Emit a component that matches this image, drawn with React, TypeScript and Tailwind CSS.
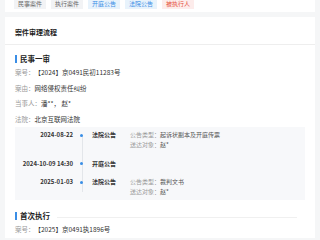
import React from "react";

const tags = [
  { label: "民事案件", cls: "bg-[#f2f3f5] text-[#666]" },
  { label: "执行案件", cls: "bg-[#f2f3f5] text-[#666]" },
  { label: "开庭公告", cls: "bg-[#e8f3fc] text-[#3a8ee6]" },
  { label: "法院公告", cls: "bg-[#e8f3fc] text-[#3a8ee6]" },
  { label: "被执行人", cls: "bg-[#fdeceb] text-[#e5533c]" },
];

const events = [
  {
    date: "2024-08-22",
    title: "法院公告",
    lines: [
      ["公告类型：", "起诉状副本及开庭传票"],
      ["送达对象：", "赵*"],
    ],
  },
  { date: "2024-10-09 14:30", title: "开庭公告", lines: [] },
  {
    date: "2025-01-03",
    title: "法院公告",
    lines: [
      ["公告类型：", "裁判文书"],
      ["送达对象：", "赵*"],
    ],
  },
];

function Field({ label, value }: { label: string; value: string }) {
  return (
    <div className="flex h-[15.5px] items-center text-[6.5px]">
      <span className="text-[#999]">{label}</span>
      <span className="text-[#333]">{value}</span>
    </div>
  );
}

function SectionTitle({ title, line }: { title: string; line?: boolean }) {
  return (
    <div className="flex items-center gap-[3px] text-[7.5px] font-bold text-[#222]">
      <span className="h-[8px] w-[2px] bg-[#3a8ee6]" />
      {title}
      {line && <span className="ml-[4px] mr-[8px] mt-[4px] h-px flex-1 bg-[#f0f0f0]" />}
    </div>
  );
}

export default function App() {
  return (
    <div
      className="h-[240px] w-[320px] overflow-hidden bg-[#f5f6f7]"
      style={{ fontFamily: '"Noto Sans CJK SC", "Noto Sans", sans-serif' }}
    >
      {/* tags */}
      <div className="mx-[5px] flex h-[12px] items-end gap-[5px] bg-white px-[9px] pb-[3px]">
        {tags.map((t) => (
          <span
            key={t.label}
            className={`flex h-[11px] items-center px-[4px] text-[6px] leading-none ${t.cls}`}
          >
            {t.label}
          </span>
        ))}
      </div>

      {/* process card */}
      <div className="mx-[5px] mt-[5px] bg-white">
        <div className="flex h-[28px] items-end border-b border-[#eeeeee] px-[10px] pb-[7px] text-[7px] font-bold text-[#222]">
          案件审理流程
        </div>

        <div className="px-[10px] pt-[8px]">
          <SectionTitle title="民事一审" />
          <div className="mt-[1px]">
            <Field label="案号：" value="【2024】京0491民初11283号" />
            <Field label="案由：" value="网络侵权责任纠纷" />
            <Field label="当事人：" value="潘**， 赵*" />
            <Field label="法院：" value="北京互联网法院" />
          </div>

          <div className="relative flex flex-col gap-[8.5px] bg-[#f7f8fa] pb-[3px] pt-[3px]">
            <div className="absolute bottom-[8px] left-[67px] top-[8px] w-px bg-[#e3e6ea]" />
            {events.map((e, i) => (
              <div key={i} className="flex text-[6px]">
                <div className="w-[58px] text-right font-bold leading-[10px] text-[#333]">
                  {e.date}
                </div>
                <div className="relative w-[19px]">
                  <span className="absolute left-[7px] top-[3.5px] h-[3px] w-[3px] rounded-full bg-[#3a8ee6]" />
                </div>
                <div className="w-[38px] font-bold leading-[10px] text-[#333]">
                  {e.title}
                </div>
                <div className="leading-[10px]">
                  {e.lines.map(([l, v]) => (
                    <div key={l}>
                      <span className="text-[#999]">{l}</span>
                      <span className="text-[#555]">{v}</span>
                    </div>
                  ))}
                </div>
              </div>
            ))}
          </div>
        </div>

        <div className="px-[10px] pt-[10px]">
          <SectionTitle title="首次执行" line />
          <div className="mt-[1px]">
            <Field label="案号：" value="【2025】京0491执1896号" />
          </div>
        </div>
      </div>
    </div>
  );
}
